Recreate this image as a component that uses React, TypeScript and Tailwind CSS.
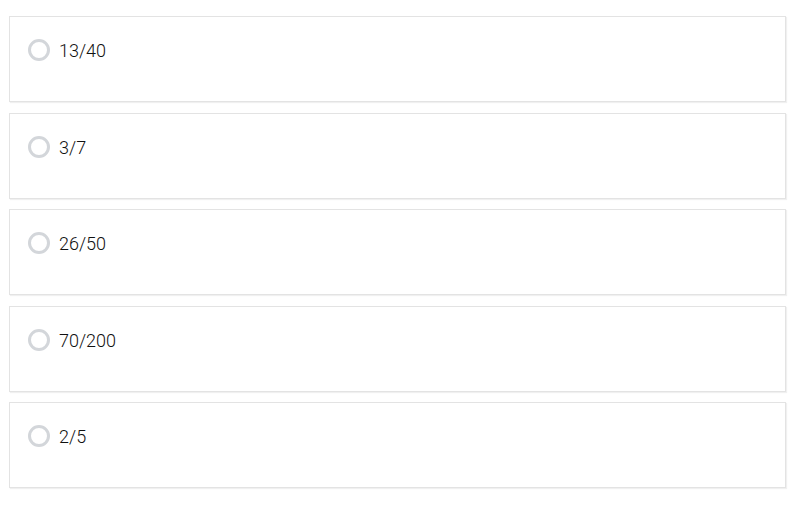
const options = ['13/40', '3/7', '26/50', '70/200', '2/5']

function OptionCard({ label }: { label: string }) {
  return (
    <label className="flex h-[86px] items-start border border-[#e3e3e3] bg-white px-[18px] pt-[22px] shadow-[1px_1px_1px_rgba(0,0,0,0.06)]">
      <span className="h-[22px] w-[22px] shrink-0 rounded-full border-[3px] border-[#d3d6da] bg-white" />
      <span className="ml-[9px] text-[18px] font-light leading-[24px] text-[#111]">{label}</span>
    </label>
  )
}

export default function App() {
  return (
    <div className="min-h-[510px] bg-white pl-[9px] pr-[14px] pt-[16px] font-['Roboto',sans-serif]">
      <div className="flex flex-col gap-[10.5px]">
        {options.map((o) => (
          <OptionCard key={o} label={o} />
        ))}
      </div>
    </div>
  )
}
